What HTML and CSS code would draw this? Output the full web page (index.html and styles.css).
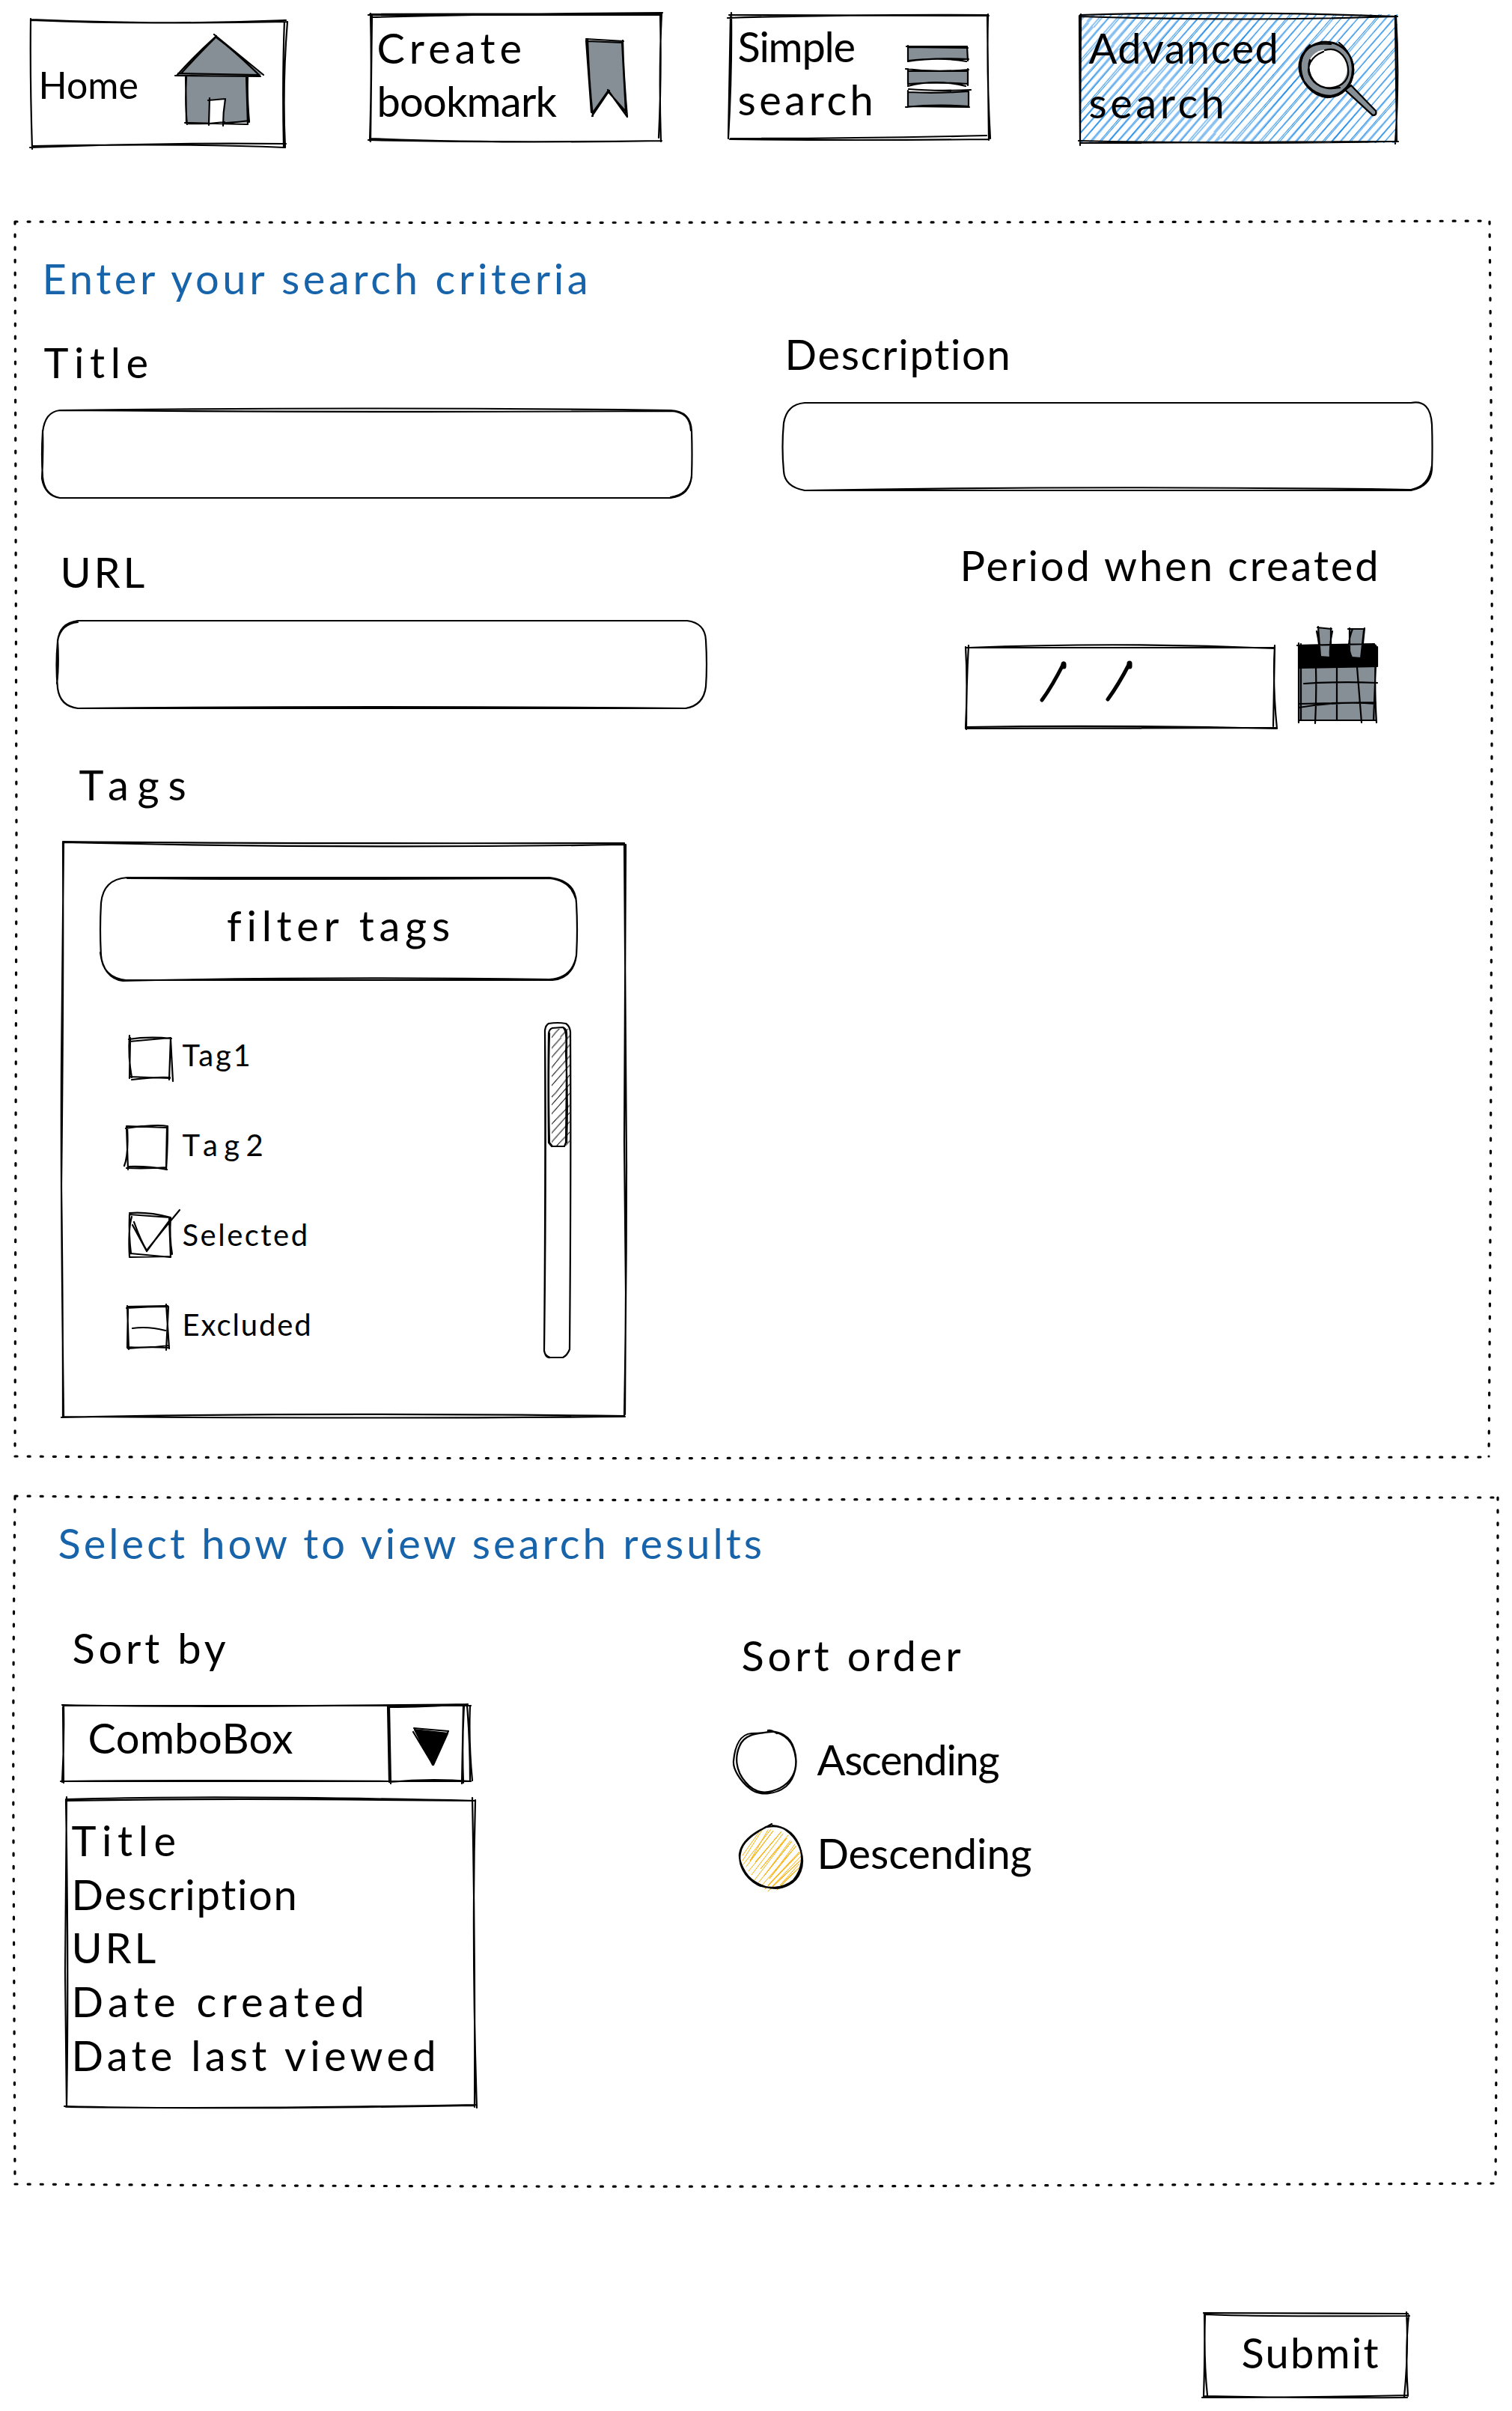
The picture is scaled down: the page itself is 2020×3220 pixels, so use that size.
FILE: index.html
```html
<!DOCTYPE html>
<html lang="en">
<head>
<meta charset="utf-8">
<title>Bookmarks - Advanced search</title>
<link rel="stylesheet" href="styles.css">
</head>
<body>
<nav class="nav">
  <a class="tab tab-home">
    <svg class="frame"><path d="M0 1Q165 8 341 1M1 0Q165 7 343 3M339 1Q336 80 338 171M343 3Q336 90 340 171M-1 171Q170 164 341 166M3 169Q200 165 339 171M0-1Q-1 80 2 173"/></svg>
    <span class="text home">Home</span>
    <svg class="icon icon-home" width="120" height="130" viewBox="234 40 120 130">
      <path class="grey" d="M249 102H331V164H249Z"/>
      <path class="grey" d="M288 48L350 100H238Z"/>
      <path d="M286 46Q320 74 352 100M289 50Q310 65 347 101M289 48Q260 74 236 101M287 51Q262 76 243 97M234 101L348 102M238 98Q290 99 346 100M249 102Q247 140 250 166M248 101L249 165M331 102Q330 130 333 163M329 102L331 166M247 164L330 166M250 165Q300 166 333 161"/>
      <path class="white" d="M279 133L300 132L299 165H280Z"/>
      <path d="M278 134L301 132M280 131L279 167M301 132Q298 150 298 168M279 165L300 163"/>
    </svg>
  </a>
  <a class="tab tab-create">
    <svg class="frame"><path d="M0 0L390-1M2 4Q190-1 391-2M-2 1L390 1M1-1Q3 80 0 169M3 0L1 170M390-2Q386 80 389 170M388 0Q390 80 386 165M-2 168Q190 172 389 169M0 166Q170 173 390 169"/></svg>
    <span class="text"><span class="create">Create</span><br><span class="bookmark">bookmark</span></span>
    <svg class="icon icon-bookmark" width="60" height="112" viewBox="780 48 60 112">
      <path class="grey" d="M785 54L832 56L838 154L813 121L792 154Z"/>
      <path d="M783 52L833 55M785 55L832 57M785 52Q787 110 792 155M783 54L790 150M832 54Q833 100 838 156M831 56L836 150M838 156L812 120M837 150L813 123M791 155L814 121M793 149L812 122"/>
    </svg>
  </a>
  <a class="tab tab-simple">
    <svg class="frame"><path d="M0 0L347 1M-2 4Q160-1 345 0M3-3Q4 80-1 164M2 0L-1 165M346-1Q344 80 349 165M345 0L347 167M1 166Q170 168 346 166M2 165Q170 165 344 161"/></svg>
    <span class="text"><span class="simple">Simple</span><br><span class="search">search</span></span>
    <svg class="icon icon-bars" width="90" height="92" viewBox="1209 58 90 92">
      <path class="grey" d="M1213 63L1293 64V79L1213 80ZM1213 95H1293V112H1213ZM1213 123H1294V142H1213Z"/>
      <path d="M1211 62H1292M1213 63L1293 64M1213 61V82M1292 62L1293 81M1213 81Q1260 76 1291 82M1213 82Q1240 77 1294 79M1210 92Q1250 97 1294 93M1213 95H1293M1213 92V113M1293 92V114M1213 115Q1250 105 1290 115M1214 112Q1250 109 1293 112M1214 119Q1250 122 1297 120M1213 123Q1250 125 1294 122M1213 121V143M1294 122V143M1210 143Q1250 139 1294 142M1213 142L1295 143"/>
    </svg>
  </a>
  <a class="tab tab-advanced">
    <svg class="frame">
      <defs>
        <pattern id="blueHatch" width="430" height="45" patternUnits="userSpaceOnUse" patternTransform="rotate(-49)">
          <path class="blue" d="M0 3L430 5M0 5L430 3M0 12L430 13M0 14L215 12L430 15M0 21L430 23M0 24L430 21M0 31L430 30M0 30L200 33L430 31M0 39L430 42M0 42L430 39"/>
        </pattern>
      </defs>
      <rect class="plain" x="0" y="-2" width="424" height="172" fill="url(#blueHatch)"/>
      <path d="M0-1Q200-7 424 1M1 1Q210 8 422 1M1-2L0 171M-1 0L0 173M422 0Q427 80 421 171M421 0L423 168M-2 167Q210 172 423 168M0 170L425 168"/>
    </svg>
    <span class="text"><span class="advanced">Advanced</span><br><span class="search">search</span></span>
    <svg class="icon icon-glass" width="112" height="110" viewBox="1732 50 112 110">
      <path class="grey" d="M1797 120L1805 114L1838 148Q1840 154 1834 154Z"/>
      <path class="grey" d="M1770 56C1790 55 1809 72 1808 95C1807 116 1792 130 1773 130C1754 128 1737 112 1737 88C1739 68 1752 57 1770 56Z"/>
      <path class="white" d="M1772 66C1788 65 1800 78 1800 92C1799 108 1788 118 1774 118C1760 117 1748 106 1747 92C1748 76 1757 67 1772 66Z"/>
      <path d="M1765 56C1795 55 1810 76 1808 97C1804 120 1787 131 1770 129C1748 123 1733 103 1736 84C1739 67 1752 56 1778 59M1789 57C1812 75 1812 108 1794 121C1775 136 1753 124 1742 108C1735 92 1736 72 1750 60M1768 69C1750 76 1746 90 1749 99C1755 114 1770 121 1790 117M1770 67C1790 61 1803 80 1801 100C1798 114 1782 119 1770 117C1752 112 1745 94 1750 80"/>
    </svg>
  </a>
</nav>

<main>
<section class="panel criteria">
  <svg class="frame"><path class="dots" d="M0 0Q500 2 985 1Q1500 1 1970-1M0 0Q2 800 2 830Q1 1200 0 1649M1970 0Q1974 400 1973 700Q1972 1300 1969 1649M0 1649Q600 1653 1100 1651Q1500 1651 1969 1650"/></svg>
  <div class="column left">
    <h2 class="text heading-enter">Enter your search criteria</h2>
    <label class="text title">Title</label>
    <div class="input input-title">
      <svg class="frame"><path d="M24 1Q420-4 840 1Q867 2 868 29Q869 60 868 88Q866 115 840 118H24Q3 114 1 90Q-1 60 1 30Q4 3 24 1M24 1Q420 4 840 2Q866 3 867 28M1 28Q2 60 0 92Q4 115 24 118M868 90Q864 114 840 117"/></svg>
    </div>
    <label class="text url">URL</label>
    <div class="input input-url">
      <svg class="frame"><path d="M28 0H842Q866 3 867 26Q869 60 867 88Q864 113 840 117H28Q4 114 1 90Q-2 60 1 28Q3 3 28 0M28 117Q420 113 840 117M1 26Q3 60 0 84M28 2Q6 4 1 26"/></svg>
    </div>
    <label class="text tags">Tags</label>
    <div class="tag-box">
      <svg class="frame"><path d="M0 0Q380 9 751 3M0-1Q300 2 750 1M0 0Q1 200-2 460Q0 600 0 768M1 0L-2 300Q-3 460 1 766M750 1Q752 300 753 430Q753 600 750 766M752 3L750 400L752 600L751 764M-2 768Q300 761 750 766M0 767Q400 770 751 767"/></svg>
      <div class="filter">
        <svg class="frame"><path d="M36 0H600Q635 4 636 34Q638 70 636 104Q632 134 604 137H34Q3 133 1 104Q-1 70 1 34Q4 2 36 0M36 1Q300 3 600 1Q628 4 635 28M0 100Q4 134 30 138Q300 132 600 136Q631 134 636 104"/></svg>
        <span class="text filter-tags">filter tags</span>
      </div>
      <div class="tag-body">
        <ul class="tag-list">
          <li><svg class="check"><path d="M4 6Q30 2 61 5M5 9L60 4M5 1Q3 30 8 57M6 4L5 58M60 4L58 60M60 6L63 62M5 56L59 58M8 60Q40 56 59 57"/></svg><span class="text small tag1">Tag1</span></li>
          <li><svg class="check"><path d="M0 5Q40-1 56 2M2 2L55 4M2 4Q4 40-2 55M1 2L3 60M56 2Q56 30 54 60M55 4L54 57M3 56Q30 55 55 60M1 58Q30 59 54 57"/></svg><span class="text small tag2">Tag2</span></li>
          <li><svg class="check"><path d="M5-2Q30-4 60 4M5 0L59 4M8 3Q3 20 5 56M5 0Q4 30 7 52M58 4L60 57M60 4Q58 30 62 53M6 52L59 57M5 57L60 56M9 14L28 49M11 10Q20 35 28 48Q50 20 72-6M28 49L60 6"/></svg><span class="text small selected">Selected</span></li>
          <li><svg class="check"><path d="M1 5Q30 3 57 3M3 3L56 2M2 2L4 60M3 6L2 58M54 0Q56 30 58 59M57 3L54 61M2 57Q30 59 57 55M3 59Q30 56 56 58M9 32Q30 29 53 35"/></svg><span class="text small excluded">Excluded</span></li>
        </ul>
        <div class="scrollbar">
          <svg class="frame">
            <defs>
              <pattern id="thumbHatch" width="120" height="25" patternUnits="userSpaceOnUse" patternTransform="rotate(-49)">
                <path class="thin" d="M0 4L120 5M0 12L120 13M0 20L60 23L120 20"/>
              </pattern>
            </defs>
            <rect class="plain" x="10" y="8" width="24" height="156" fill="url(#thumbHatch)"/>
            <path d="M6 1Q18-1 29 1Q34 4 35 12Q36 200 34 436Q31 444 25 447H8Q1 445 0 438Q3 200 1 10Q2 3 6 1M1 10Q2 200 0 438Q2 448 8 447M11 7L25 6Q30 8 30 14Q30 90 29 160L27 165H10L6 160Q5 80 6 14Q7 8 11 7M7 14Q5 80 7 160L11 165M26 7Q31 12 29 40Q32 100 30 160"/>
          </svg>
        </div>
      </div>
    </div>
  </div>
  <div class="column right">
    <label class="text description">Description</label>
    <div class="input input-description">
      <svg class="frame"><path d="M30 1H840Q866-4 868 30Q869 60 868 90Q866 113 840 118H30Q3 113 2 92Q-1 60 2 28Q6 3 30 1M30 118Q420 111 840 117Q864 113 868 85"/></svg>
    </div>
    <label class="text period">Period when created</label>
    <div class="date-row">
      <div class="date">
        <svg class="frame"><path d="M0 1L413 1M4 1Q210-7 413 2M0 0Q3 50 0 108M4-2Q1 50 1 110M413-2Q410 50 416 109M413 0L411 106M0 107Q200 104 415 109M0 109L414 108"/><path class="slash" d="M131 22Q116 52 102 71M219 22Q204 51 190 70"/><path class="slash-dot" d="M131 23V26M219 22V26"/></svg>
      </div>
      <svg class="icon" width="112" height="132" viewBox="1732 834 112 132">
        <path class="grey" d="M1736 890H1838V963H1736Z"/>
        <path class="black" d="M1735 861L1837 860L1840 864V891L1736 893Z"/>
        <path class="grey" d="M1762 839H1778L1777 877L1763 876Z"/>
        <path class="grey" d="M1803 839H1823L1819 878L1806 877Q1800 868 1803 839Z"/>
        <path d="M1733 862L1836 860M1735 859V965M1738 860V962M1838 862Q1836 920 1839 965M1840 864V890M1835 962L1838 888M1735 962H1838M1758 892Q1759 930 1757 966M1786 891V962M1813 891Q1816 930 1819 965M1742 913Q1790 910 1840 912M1735 940L1838 938M1735 945Q1790 936 1838 940M1760 838L1779 840M1761 837L1764 877M1759 843Q1763 860 1763 876M1778 839V877M1780 843Q1776 860 1777 878M1801 840H1822M1803 839V878M1807 840Q1798 862 1806 878M1823 839L1819 878M1822 842L1818 880M1806 879L1819 880"/>
      </svg>
    </div>
  </div>
</section>

<section class="panel view">
  <svg class="frame"><path class="dots" d="M0-1Q300 2 560 4Q900 5 1250 3Q1600 1 1980 1M0 0Q-3 250-2 460Q-1 700 0 918M1981 1Q1981 450 1978 918M0 918Q600 922 1100 921Q1500 919 1978 917"/></svg>
  <h2 class="text heading-view">Select how to view search results</h2>
  <div class="view-columns">
    <div class="sort-by">
      <label class="text sort-by-label">Sort by</label>
      <div class="combo">
        <svg class="frame">
          <path d="M0 0Q180 4 542-1M1 1L546 1M2 1Q3 50 0 103M1 3L2 104M541 1Q545 50 545 102M545 1Q543 50 548 101M0 102Q200 100 436 102M-2 102L546 102M435 1L437 103M437 3L439 105M438 3Q480 3 542-1M536 1L534 105M537 2Q534 50 536 104M437 103Q490 98 546 102"/>
          <path class="black" d="M470 32L516 37L495 80Z"/>
          <path d="M470 31L516 35M469 36L493 76M471 33L495 80M516 35L495 78M515 38L496 80"/>
        </svg>
        <span class="text combo-text">ComboBox</span>
      </div>
      <div class="options">
        <svg class="frame"><path d="M0 0Q200-6 547 2M1 2Q200-2 545 2M1-3Q0 100-1 230Q0 330 1 411M0 0Q4 230 1 410M543-2Q547 200 546 411M547 1Q542 200 549 412M-2 410Q200 415 546 409M0 411Q250 414 547 408"/></svg>
        <ul class="text option-list">
          <li class="title">Title</li>
          <li class="description">Description</li>
          <li class="url">URL</li>
          <li class="created">Date created</li>
          <li class="viewed">Date last viewed</li>
        </ul>
      </div>
    </div>
    <div class="sort-order">
      <label class="text sort-order-label">Sort order</label>
      <div class="radio">
        <svg class="circle"><path d="M46 3C60 1 76 8 81 26C87 45 82 66 70 76C56 87 34 89 22 79C8 68-1 52 0 42C2 20 10 6 24 5Q40 5 50 2M58 5Q50 0 46 1M50 2C70 6 80 16 83 38C85 56 77 70 62 78C44 87 28 85 16 70C2 54 2 36 8 22C14 7 28 5 52 3"/></svg>
        <span class="text ascending">Ascending</span>
      </div>
      <div class="radio radio-second">
        <svg class="circle"><path class="amber" d="M12 43L34 12M12 50L39 8M13 55L50 8M17 58L53 10L22 50L46 9M20 64L64 11L29 52L60 16M24 69L66 14M28 76L71 20L36 61L73 16M32 81L78 24L41 70L76 23M37 84L84 30L48 74L82 28M42 88L92 36L46 83L88 38M46 91L90 49L52 84L90 44M58 89L89 58L62 83L88 54"/><path d="M52 3C68 3 84 18 90 37C96 57 88 75 74 82C58 91 40 86 28 78C14 69 7 50 8 41C10 28 20 18 34 10Q46 4 51 1M45 5C65 1 80 12 87 28C94 44 92 62 80 76C66 88 44 88 32 82C14 72 6 54 9 40C11 24 28 14 43 5"/></svg>
        <span class="text descending">Descending</span>
      </div>
    </div>
  </div>
</section>

<button class="submit">
  <svg class="frame"><path d="M-1-1L272 0M1 1Q60 4 274 3M0-1Q1 50-1 111M1 1Q-1 60 4 109M270-2Q273 50 267 111M273 2Q268 50 272 110M-3 112Q140 112 272 109M0 110Q140 113 271 112"/></svg>
  <span class="text submit-text">Submit</span>
</button>
</main>
</body>
</html>
```
FILE: styles.css
```css
* { box-sizing: border-box; }

body {
  margin: 0;
  width: 2020px;
  height: 3220px;
  background: #fff;
  color: #000;
  font-family: Lato, "Open Sans", sans-serif;
}

h2, ul { margin: 0; padding: 0; font-weight: 400; list-style: none; }

/* Hand-drawn strokes */
svg { display: block; flex: none; overflow: visible; }
svg path { fill: none; stroke: #000; stroke-width: 2.2; stroke-linecap: round; }
svg .grey { fill: #868e96; stroke: none; }
svg .white { fill: #fff; stroke: none; }
svg .black { fill: #000; stroke: none; }
svg .blue { stroke: #228be6; stroke-width: 1; }
svg .amber { stroke: #fab005; stroke-width: 1; }
svg .thin { stroke-width: 1.1; }
svg .dots { stroke-width: 3.2; stroke-dasharray: 3 14; }
svg .slash { stroke-width: 5; }
svg .slash-dot { stroke-width: 7; }
svg .plain { stroke: none; }
.frame { position: absolute; inset: 0; width: 100%; height: 100%; }
.icon { position: relative; }
.icon-glass .grey { stroke: #000; stroke-width: 2.3; }

/* Text */
.text { position: relative; display: block; font-size: 56px; line-height: 70px; white-space: nowrap; transform: translate(1.5px, 2px); }
.small { font-size: 40px; line-height: 50px; }
.home { font-size: 50px; }
.create { letter-spacing: 6.1px; }
.bookmark { letter-spacing: -.8px; }
.simple { letter-spacing: -1.25px; }
.search { letter-spacing: 4.5px; }
.advanced { letter-spacing: 1.45px; }
.heading-enter { letter-spacing: 4.62px; color: #1864ab; }
.title { letter-spacing: 7.6px; }
.description { letter-spacing: 1.72px; }
.url { letter-spacing: 3.9px; }
.tags { letter-spacing: 11.8px; }
.filter-tags { letter-spacing: 6.75px; }
.tag1 { letter-spacing: 2.75px; }
.tag2 { letter-spacing: 8.4px; }
.selected { letter-spacing: 2.5px; }
.excluded { letter-spacing: 1.9px; }
.period { letter-spacing: 2.95px; }
.heading-view { letter-spacing: 4.02px; color: #1864ab; }
.sort-by-label { letter-spacing: 4.8px; }
.combo-text { letter-spacing: .4px; }
.created { letter-spacing: 6.76px; }
.viewed { letter-spacing: 5.3px; }
.sort-order-label { letter-spacing: 4.9px; }
.ascending { letter-spacing: -1.28px; }
.descending { letter-spacing: -.12px; }
.submit-text { letter-spacing: 2.2px; }

/* Navigation */
.nav { display: flex; align-items: flex-start; height: 296px; padding: 19px 0 0 41px; }
.tab { position: relative; display: flex; align-items: flex-start; justify-content: space-between; }
.tab .text { line-height: 71px; }
.tab-home { width: 341px; height: 170px; margin-top: 7px; padding: 14px 28px 0 9px; }
.tab-home .home { margin-top: 36px; }
.tab-create { width: 390px; height: 170px; margin-left: 112px; padding: 7px 44px 0 8px; }
.icon-bookmark { margin-top: 22px; }
.tab-simple { width: 348px; height: 166px; margin: 1px 0 0 90px; padding: 4px 23px 0 10px; }
.icon-bars { margin-top: 34px; }
.tab-advanced { width: 424px; height: 169px; margin: 2px 0 0 121px; padding: 4px 23px 0 10px; }
.tab-advanced .text { line-height: 73px; }
.icon-glass { margin-top: 25px; }

/* Search criteria */
.panel { position: relative; margin-left: 20px; }
.criteria { display: flex; width: 1970px; height: 1650px; }
.column { display: flex; flex-direction: column; align-items: flex-start; }
.left { width: 1025px; padding-top: 39px; }
.left .heading-enter { margin: 0 0 42px 35px; }
.left .title { margin-left: 37px; }
.input { position: relative; width: 869px; height: 118px; }
.input-title { margin: 30px 0 62px 36px; }
.left .url { margin-left: 59px; }
.input-url { margin: 32px 0 64px 56px; }
.left .tags { margin-left: 84px; }
.right { padding-top: 140px; }
.right .description { margin-left: 2px; }
.input-description { margin: 31px 0 63px; }
.period { margin-left: 236px; }
.date-row { display: flex; align-items: flex-start; margin: 46px 0 0 245px; }
.date { position: relative; width: 414px; height: 108px; margin: 30px 28px 0 0; }

/* Tag picker */
.tag-box { position: relative; width: 751px; height: 768px; margin: 44px 0 0 64px; padding: 47px 64px 0 50px; }
.filter { position: relative; display: flex; align-items: center; justify-content: center; height: 137px; padding: 0 0 14px 3px; }
.tag-body { display: flex; justify-content: space-between; padding: 57px 9px 0 34px; }
.tag-list { display: flex; flex-direction: column; gap: 70px; padding-top: 16px; }
.tag-list li { display: flex; gap: 12px; }
.check { width: 62px; height: 50px; }
.scrollbar { position: relative; width: 35px; height: 447px; }

/* Result view */
.view { width: 1980px; height: 918px; margin-top: 53px; padding-top: 25px; }
.heading-view { margin: 0 0 70px 56px; }
.view-columns { display: flex; }
.sort-by { width: 897px; padding-left: 63px; }
.sort-by-label { margin-left: 12px; }
.combo { position: relative; width: 546px; height: 102px; margin: 43px 0 24px; padding: 7px 0 0 33px; }
.options { position: relative; width: 547px; height: 411px; margin-left: 5px; padding: 17px 0 0 6px; }
.option-list { line-height: 71.7px; }
.sort-order { padding: 10px 0 0 63px; }
.sort-order-label { margin: 0 0 66px 9px; }
.radio { display: flex; gap: 16px; height: 85px; padding-top: 3px; }
.radio-second { margin-top: 41px; padding-top: 2px; }
.circle { width: 94px; height: 85px; margin-top: -3px; }

/* Submit */
.submit { position: relative; display: block; width: 272px; height: 112px; margin: 173px 0 0 1609px; padding: 15px 0 0 48px; border: 0; background: none; color: #000; font: inherit; text-align: left; }
.submit .text { height: 97px; }
```
